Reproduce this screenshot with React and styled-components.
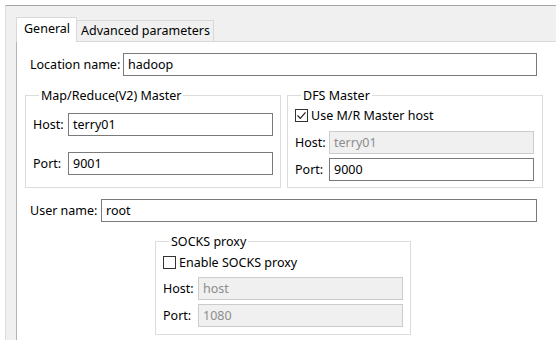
import React from "react";
import styled, { createGlobalStyle } from "styled-components";

const Global = createGlobalStyle`
  html, body { margin: 0; padding: 0; background: #ffffff; }
  body { font-family: "Noto Sans", "Open Sans", sans-serif; font-size: 12px; color: #000; }
  #root { width: 556px; height: 340px; overflow: hidden; }
`;

const Frame = styled.div`
  margin: 5px 0 0 5px;
  height: 335px;
  box-sizing: border-box;
  border-top: 1px solid #a3a3a3;
  border-left: 1px solid #dcdcdc;
  background: #f0f0f0;
  padding: 11px 0 0 10px;
  display: flex;
  flex-direction: column;
`;

const TabStrip = styled.div`
  display: flex;
  align-items: flex-end;
  height: 24px;
  position: relative;
  z-index: 1;
`;

const Tab = styled.div`
  box-sizing: border-box;
  height: ${(p) => (p.$active ? 25 : 21)}px;
  margin-bottom: ${(p) => (p.$active ? -1 : 0)}px;
  padding: 0 ${(p) => (p.$active ? 6 : 3)}px 0 ${(p) => (p.$active ? 7 : 4)}px;
  background: ${(p) => (p.$active ? "#ffffff" : "#f0f0f0")};
  border: 1px solid #d9d9d9;
  border-left: ${(p) => (p.$active ? "1px solid #d9d9d9" : "none")};
  border-bottom: none;
  display: flex;
  align-items: center;
  font-size: 12.5px;
  line-height: 1;
  padding-bottom: ${(p) => (p.$active ? 2 : 0)}px;
`;

const Panel = styled.div`
  flex: 1;
  background: #ffffff;
  border-top: 1px solid #d9d9d9;
  border-left: 1px solid #b4b4b4;
  padding-top: 11px;
  display: flex;
  flex-direction: column;
`;

const FieldRow = styled.div`
  display: flex;
  align-items: center;
  margin: ${(p) => p.$mt || 0}px 19px 0 13px;
`;

const Label = styled.label`
  flex-shrink: 0;
  width: ${(p) => p.$w}px;
  white-space: nowrap;
  font-size: 12.5px;
`;

const Input = styled.div`
  box-sizing: border-box;
  flex: 1;
  height: 23px;
  border: 1px solid ${(p) => (p.$disabled ? "#cccccc" : "#7a7a7a")};
  background: ${(p) => (p.$disabled ? "#f0f0f0" : "#ffffff")};
  color: ${(p) => (p.$disabled ? "#8d8d8d" : "#000000")};
  padding-left: 4px;
  display: flex;
  align-items: center;
  font-size: 12.5px;
`;

const GroupRow = styled.div`
  display: flex;
  gap: 6px;
  margin: 11px 0 0 8px;
`;

const Group = styled.fieldset`
  box-sizing: border-box;
  width: 256px;
  margin: ${(p) => p.$margin || "0"};
  border: 1px solid #dcdcdc;
  padding: ${(p) => p.$pad};
  display: flex;
  flex-direction: column;
  min-width: 0;
`;

const Legend = styled.legend`
  margin-left: 6px;
  padding: 0 2px;
  font-size: 12.5px;
  line-height: 17px;
`;

const GroupField = styled.div`
  display: flex;
  align-items: center;
  margin-top: ${(p) => p.$mt || 0}px;
`;

const CheckRow = styled.div`
  display: flex;
  align-items: center;
  height: 17px;
  margin-top: ${(p) => p.$mt || 0}px;
  font-size: 12.5px;
  gap: 3px;
`;

const Box = styled.span`
  box-sizing: border-box;
  width: 13px;
  height: 13px;
  border: 1px solid #333333;
  background: #ffffff;
  display: inline-flex;
  align-items: center;
  justify-content: center;
`;

const Checkbox = ({ checked }) => (
  <Box>
    {checked && (
      <svg width="11" height="11" viewBox="0 0 11 11">
        <path d="M1.5 5.5 L4.3 8.3 L9.5 2.3" fill="none" stroke="#222" strokeWidth="1.2" />
      </svg>
    )}
  </Box>
);

const Socks = styled(Group)`
  margin: 11px 0 0 138px;
`;

export default function App() {
  return (
    <>
      <Global />
      <Frame>
        <TabStrip>
          <Tab $active>General</Tab>
          <Tab>Advanced parameters</Tab>
        </TabStrip>
        <Panel>
          <FieldRow>
            <Label $w={93}>Location name:</Label>
            <Input>hadoop</Input>
          </FieldRow>
          <GroupRow>
            <Group $pad="9px 7px 12px 7px">
              <Legend>Map/Reduce(V2) Master</Legend>
              <GroupField>
                <Label $w={35}>Host:</Label>
                <Input>terry01</Input>
              </GroupField>
              <GroupField $mt={16}>
                <Label $w={35}>Port:</Label>
                <Input>9001</Input>
              </GroupField>
            </Group>
            <Group $pad="0 8px 6px 7px">
              <Legend>DFS Master</Legend>
              <CheckRow $mt={3}>
                <Checkbox checked />
                Use M/R Master host
              </CheckRow>
              <GroupField $mt={7}>
                <Label $w={34}>Host:</Label>
                <Input $disabled>terry01</Input>
              </GroupField>
              <GroupField $mt={4}>
                <Label $w={34}>Port:</Label>
                <Input>9000</Input>
              </GroupField>
            </Group>
          </GroupRow>
          <FieldRow $mt={11}>
            <Label $w={71}>User name:</Label>
            <Input>root</Input>
          </FieldRow>
          <Socks $pad="0 7px 7px 7px">
            <Legend>SOCKS proxy</Legend>
            <CheckRow $mt={4}>
              <Checkbox />
              Enable SOCKS proxy
            </CheckRow>
            <GroupField $mt={6}>
              <Label $w={35}>Host:</Label>
              <Input $disabled>host</Input>
            </GroupField>
            <GroupField $mt={4}>
              <Label $w={35}>Port:</Label>
              <Input $disabled>1080</Input>
            </GroupField>
          </Socks>
        </Panel>
      </Frame>
    </>
  );
}
